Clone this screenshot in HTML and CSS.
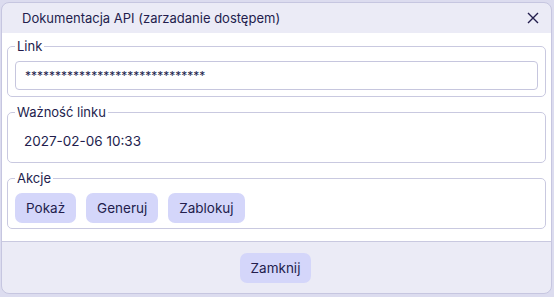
FILE: index.html
```html
<!DOCTYPE html>
<html lang="pl">
<head>
  <meta charset="UTF-8" />
  <title>Dokumentacja API</title>
  <link rel="stylesheet" href="styles.css">
</head>
<body>
  <div class="dialog">
    <div class="naglowek">
      <span class="tytul">Dokumentacja API (zarzadanie dostępem)</span>
      <button class="zamknij-x" title="Zamknij">
        <svg width="12" height="12" viewBox="0 0 12 12"><path d="M1 1 L11 11 M11 1 L1 11" stroke="#231d4d" stroke-width="1.4" fill="none"/></svg>
      </button>
    </div>

    <div class="tresc">
      <fieldset class="pole">
        <legend>Link</legend>
        <input class="wejscie" type="text" value="******************************" readonly>
      </fieldset>

      <fieldset class="pole">
        <legend>Ważność linku</legend>
        <div class="wartosc">2027-02-06 10:33</div>
      </fieldset>

      <fieldset class="pole">
        <legend>Akcje</legend>
        <div class="akcje">
          <button class="przycisk">Pokaż</button>
          <button class="przycisk">Generuj</button>
          <button class="przycisk">Zablokuj</button>
        </div>
      </fieldset>
    </div>

    <div class="stopka">
      <button class="przycisk">Zamknij</button>
    </div>
  </div>
</body>
</html>
```

FILE: styles.css
```css
* { box-sizing: border-box; }
html, body {
  margin: 0; padding: 0;
  background: #dcdcef;
  font-family: Inter, "Open Sans", sans-serif;
  color: #231d4d;
}
body { padding: 2px 2px 0 1px; }

.dialog {
  width: 551px; height: 292px;
  border: 1px solid #c6c6e0; border-radius: 8px;
  background: #ebebf6; overflow: hidden;
  display: flex; flex-direction: column;
}

.naglowek {
  height: 30px; flex: none;
  display: flex; align-items: center; justify-content: space-between;
  padding: 0 12px 0 20px;
}
.tytul { font-size: 13px; }
.zamknij-x {
  background: none; border: none; padding: 0;
  width: 12px; height: 12px; display: flex; cursor: pointer;
}

.tresc {
  background: #fff;
  padding: 5px 5px 0 5px;
  height: 208px; flex: none;
  display: flex; flex-direction: column; gap: 7px;
}

.pole {
  margin: 0; min-width: 0;
  border: 1px solid #c9c9e0; border-radius: 5px;
  padding: 7px 7px 6px 7px;
}
.pole legend {
  font-size: 13px; line-height: 16px;
  padding: 0 2px; color: #231d4d;
}

.wejscie {
  display: block; width: 100%; height: 29px;
  border: 1px solid #c6c6de; border-radius: 4px;
  padding: 0 9px; font-family: inherit;
  font-size: 12px; color: #231d4d; background: #fff;
}

.wartosc {
  height: 29px; line-height: 29px;
  padding-left: 9px; font-size: 13.5px;
}

.akcje { display: flex; gap: 10px; height: 29px; align-items: center; }

.przycisk {
  height: 30px; padding: 0 11px;
  background: #d4d6fa; border: none; border-radius: 7px;
  font-family: inherit; font-size: 13.5px; color: #231d4d; cursor: pointer;
}
.akcje .przycisk { margin-top: 1px; }

.stopka {
  flex: 1;
  border-top: 1px solid #c9c9e0;
  display: flex; align-items: center; justify-content: center;
  padding-right: 2px;
}
```
